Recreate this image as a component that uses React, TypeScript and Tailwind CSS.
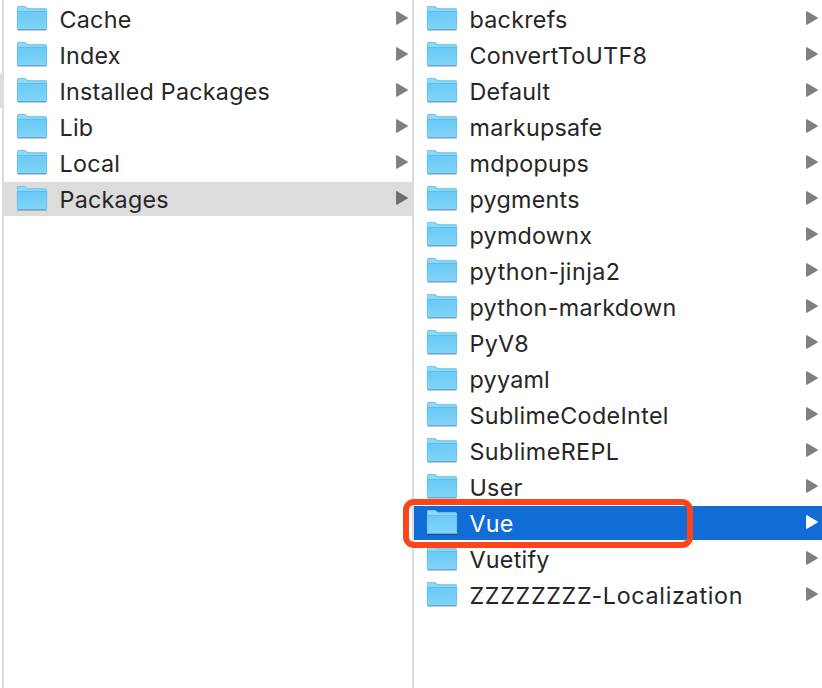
const left = ["Cache", "Index", "Installed Packages", "Lib", "Local", "Packages"];
const right = ["backrefs", "ConvertToUTF8", "Default", "markupsafe", "mdpopups", "pygments", "pymdownx", "python-jinja2", "python-markdown", "PyV8", "pyyaml", "SublimeCodeIntel", "SublimeREPL", "User", "Vue", "Vuetify", "ZZZZZZZZ-Localization"];

const tracking: Record<string, string> = {
  "ZZZZZZZZ-Localization": "tracking-[0.7px]",
  "python-jinja2": "tracking-[0.45px]",
  "python-markdown": "tracking-[0.3px]",
  SublimeREPL: "tracking-[0.42px]",
  SublimeCodeIntel: "tracking-[0.35px]",
};

function Folder() {
  return (
    <svg width="32" height="28" viewBox="0 0 32 28" className="mb-0.5 shrink-0">
      <defs>
        <linearGradient id="front" x1="0" y1="0" x2="0" y2="1">
          <stop offset="0" stopColor="#6acaf7" />
          <stop offset="1" stopColor="#81d4fa" />
        </linearGradient>
      </defs>
      <path d="M1.500 26.500h29" stroke="#000" strokeOpacity=".22" />
      <path d="M1 24V3.500Q1 2 2.500 2H8.500q1 0 1.800 1t2.200 1.300h17Q31 4.300 31 5.500V24z" fill="#8fd8f6" />
      <path d="M1.500 6V3.500q0-1 1-1H8.300q.9 0 1.700 1t2.500 1.300h17q1 0 1 1" fill="none" stroke="#69bce0" strokeWidth=".8" />
      <path d="M1 7h30v17.500q0 1.500-1 1.500H2Q1 26 1 24.500z" fill="url(#front)" />
      <path d="M1 7.400h30" stroke="#5cb9e4" strokeWidth=".8" />
      <path d="M1.300 7v17.500M30.700 7v17.500" stroke="#5fb9e2" strokeWidth=".6" />
      <path d="M1.500 25.500h29" stroke="#5caed2" />
    </svg>
  );
}

function Row({ name, state }: { name: string; state?: "gray" | "blue" }) {
  const bg = state === "blue" ? "bg-[#116cd6] text-white" : state === "gray" ? "bg-[#dcdcdc] text-[#262626]" : "text-[#262626]";
  const arrow = state === "blue" ? "#fff" : state === "gray" ? "#6e6e6e" : "#7f7f7f";
  return (
    <div className={`flex h-[34px] shrink-0 items-center pl-3 pr-1 ${bg}`}>
      <Folder />
      <span className={`ml-[11.5px] flex-1 whitespace-nowrap pt-0.5 text-[23.3px] leading-[34px] ${tracking[name] ?? "tracking-[0.25px]"}`}>{name}</span>
      <svg width="12" height="14" viewBox="0 0 12 14" className="mb-0.5">
        <path d="M.7.700L11.300 7L.7 13.300z" fill={arrow} stroke={arrow} strokeWidth="1.200" strokeLinejoin="round" />
      </svg>
    </div>
  );
}

export default function App() {
  return (
    <div className="flex h-[688px] w-[822px] overflow-hidden bg-white font-['Inter',sans-serif]">
      <div className="w-1 shrink-0 border-r-2 border-[#dcdcdc] pt-[74px]">
        <div className="h-[34px] w-0.5 bg-[#dcdcdc]" />
      </div>
      <div className="flex w-[408px] shrink-0 flex-col gap-0.5 pt-0.5">
        {left.map((n) => <Row key={n} name={n} state={n === "Packages" ? "gray" : undefined} />)}
      </div>
      <div className="w-0.5 shrink-0 bg-[#dcdcdc]" />
      <div className="relative flex flex-1 flex-col gap-0.5 pt-0.5">
        {right.map((n) => <Row key={n} name={n} state={n === "Vue" ? "blue" : undefined} />)}
        <div className="absolute -left-[11px] top-[499px] h-[49px] w-[290px] rounded-[11px] border-[6px] border-[#ff431b]" />
      </div>
    </div>
  );
}
